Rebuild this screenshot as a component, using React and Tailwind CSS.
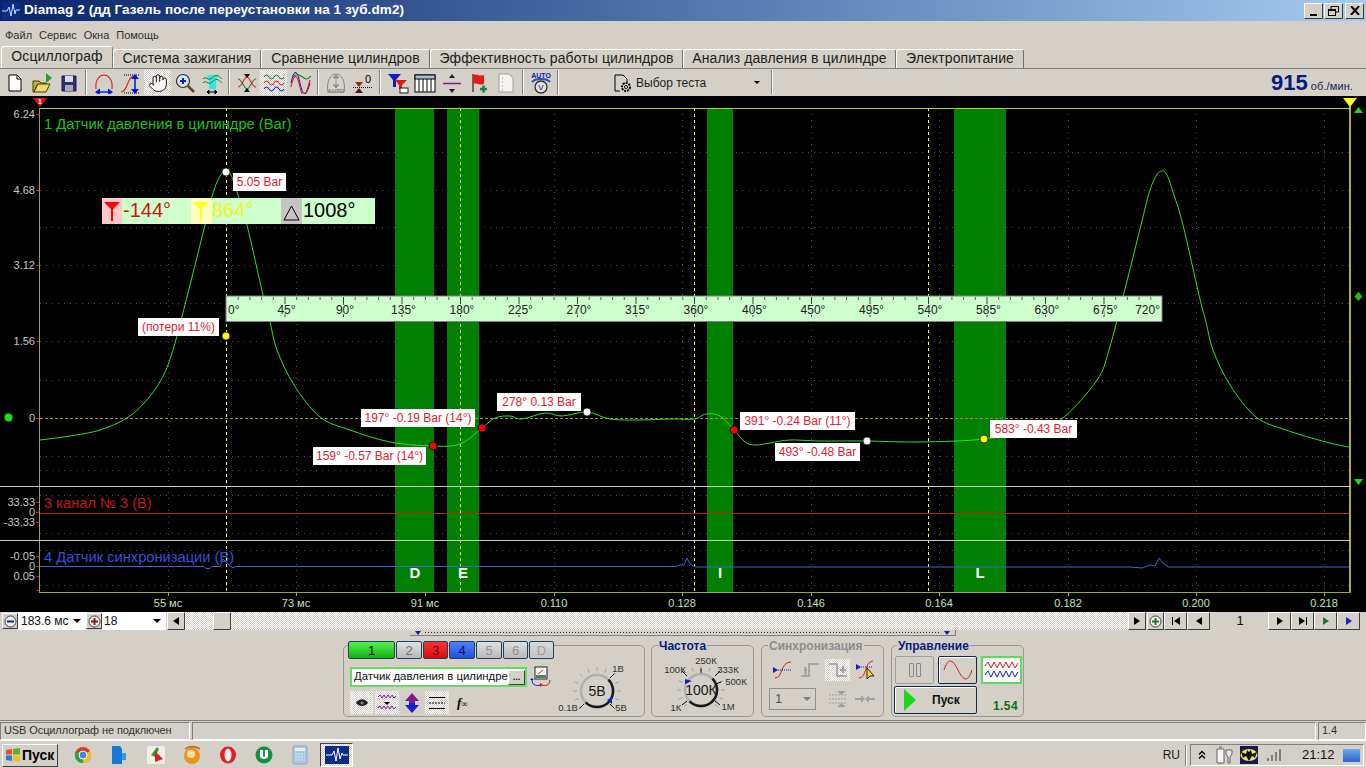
import React from 'react'
import { Hand } from 'lucide-react'

const raised = 'border border-t-white border-l-white border-r-[#404040] border-b-[#404040] bg-[#d4d0c8]'
const sunken = 'border border-t-[#808080] border-l-[#808080] border-r-white border-b-white'
const dither = 'bg-[repeating-conic-gradient(#ffffff_0_25%,#d4d0c8_0_50%)] bg-[length:2px_2px]'

// smooth line through the points (catmull-rom)
const smooth = (pts) => {
  let d = `M${pts[0][0]} ${pts[0][1]}`
  for (let i = 0; i < pts.length - 1; i++) {
    const p0 = pts[i - 1] || pts[i]
    const p1 = pts[i]
    const p2 = pts[i + 1]
    const p3 = pts[i + 2] || p2
    const c1 = [p1[0] + (p2[0] - p0[0]) / 6, p1[1] + (p2[1] - p0[1]) / 6]
    const c2 = [p2[0] - (p3[0] - p1[0]) / 6, p2[1] - (p3[1] - p1[1]) / 6]
    d += ` C${c1[0]} ${c1[1]} ${c2[0]} ${c2[1]} ${p2[0]} ${p2[1]}`
  }
  return d
}

const curve = [
  [40, 440], [70, 436], [100, 430], [127, 418], [145, 402], [161, 380], [173, 350], [190, 285], [205, 225], [213, 193], [220, 176], [226, 171],
  [231, 175], [238, 195], [247, 225], [263, 295], [270, 322], [277, 350], [294, 385], [320, 417], [350, 430], [390, 442], [432, 446], [460, 444], [482, 428],
  [495, 418], [510, 416], [522, 419], [545, 413], [562, 416], [587, 412], [610, 419], [640, 420], [670, 419], [694, 419], [706, 414], [720, 416], [734, 430],
  [745, 442], [755, 445], [770, 443], [790, 440], [820, 441], [866, 441], [920, 442], [984, 439], [1035, 429], [1063, 418], [1097, 380], [1109, 350], [1126, 285], [1141, 225], [1149, 193], [1156, 176], [1162, 171],
  [1167, 175], [1174, 195], [1183, 225], [1199, 295], [1206, 322], [1213, 350], [1230, 385], [1256, 417], [1286, 430], [1326, 442], [1349, 447],
]

const bands = [
  { x: 395, w: 39, l: 'D' },
  { x: 447, w: 32, l: 'E' },
  { x: 707, w: 26, l: 'I' },
  { x: 954, w: 52, l: 'L' },
]

const timeTicks = [
  [168, '55 мс'], [296, '73 мс'], [425, '91 мс'], [554, '0.110'], [682, '0.128'],
  [811, '0.146'], [939, '0.164'], [1068, '0.182'], [1196, '0.200'], [1324, '0.218'],
]

const yLabels = [
  [114, '6.24'], [190, '4.68'], [265, '3.12'], [341, '1.56'], [418, '0'],
  [502, '33.33'], [512, '0'], [522, '-33.33'], [556, '-0.05'], [566, '0'], [576, '0.05'],
]

const dots = [
  [226, 172, '#ffffff'], [226, 336, '#ffff00'], [433, 446, '#ff0000'], [482, 428, '#ff0000'],
  [587, 412, '#ffffff'], [734, 430, '#ff0000'], [867, 441, '#ffffff'], [984, 439, '#ffff00'],
]

const marks = [
  { t: '5.05 Bar', c: 'left-[233px] top-[77px] w-[53px]' },
  { t: '(потери 11%)', c: 'left-[138px] top-[222px] w-[81px]' },
  { t: '197° -0.19 Bar (14°)', c: 'left-[361px] top-[313px] w-[114px]' },
  { t: '159° -0.57 Bar (14°)', c: 'left-[313px] top-[351px] w-[113px]' },
  { t: '278° 0.13 Bar', c: 'left-[497px] top-[297px] w-[84px]' },
  { t: '391° -0.24 Bar (11°)', c: 'left-[740px] top-[316px] w-[115px]' },
  { t: '493° -0.48 Bar', c: 'left-[775px] top-[347px] w-[85px]' },
  { t: '583° -0.43 Bar', c: 'left-[990px] top-[324px] w-[87px]' },
]

const Funnel = ({ color }) => (
  <svg width="20" height="26" viewBox="0 0 20 26">
    <path d="M2 4H18L11 11V23H9V11Z" fill={color} />
  </svg>
)

const Chart = () => (
  <div className="relative h-[516px] bg-black overflow-hidden">
    <svg className="absolute inset-0 block" width="1366" height="516" viewBox="0 96 1366 516" fontFamily="Liberation Sans, sans-serif">
      {bands.map((b) => (
        <rect key={b.l} x={b.x} y="108" width={b.w} height="484" fill="#008000" />
      ))}
      {[152, 190, 227, 265, 303, 341, 380, 456, 470, 495, 533, 550, 585].map((y) => (
        <line key={y} x1="40" x2="1349" y1={y + 0.5} y2={y + 0.5} stroke="#505050" strokeDasharray="1 5" />
      ))}
      {timeTicks.map(([x]) => (
        <g key={x}>
          <line x1={x + 0.5} x2={x + 0.5} y1="108" y2="592" stroke="#505050" strokeDasharray="1 5" />
          <line x1={x + 0.5} x2={x + 0.5} y1="592" y2="596" stroke="#a0b060" />
        </g>
      ))}
      {[226, 460, 694, 928].map((x) => (
        <line key={x} x1={x + 0.5} x2={x + 0.5} y1="108" y2="592" stroke="#ffff66" strokeDasharray="3 3" />
      ))}
      <line x1="40" x2="1349" y1="418.5" y2="418.5" stroke="#a08850" strokeDasharray="3 2" />
      <line x1="40" x2="1349" y1="513.5" y2="513.5" stroke="#a83018" />
      <path d="M40 566.5H204L206 568.5H210L212 566.5H220L223 559L226 562L229 565L233 568L236 566.5H676L680 565H684L687 558L690 564L695 567H1130L1142 568L1150 565L1155 566L1159 558L1163 563L1168 567H1349" fill="none" stroke="#3868d8" />
      <path d={smooth(curve)} fill="none" stroke="#30e030" strokeWidth="1" />
      <line x1="39" x2="1351" y1="108.5" y2="108.5" stroke="#a8d040" />
      <line x1="39" x2="1351" y1="592.5" y2="592.5" stroke="#98a848" />
      <line x1="39.5" x2="39.5" y1="108" y2="592" stroke="#a0a040" />
      {[114, 190, 265, 341, 418, 502, 512, 522, 556, 566, 576, 590].map((y) => (
        <line key={y} x1="36" x2="39" y1={y + 0.5} y2={y + 0.5} stroke="#b03010" />
      ))}
      <line x1="0" x2="1350" y1="486.5" y2="486.5" stroke="#c8c8c8" />
      <line x1="0" x2="1350" y1="540.5" y2="540.5" stroke="#c8c8c8" />
      <line x1="1350" x2="1350" y1="100" y2="592" stroke="#e8e850" strokeWidth="1.5" />
      {yLabels.map(([y, t]) => (
        <text key={`${y}${t}`} x="35" y={y + 4} textAnchor="end" fontSize="11" fill="#c8c8c8">{t}</text>
      ))}
      {timeTicks.map(([x, t]) => (
        <text key={t} x={x} y="607" textAnchor="middle" fontSize="11" fill="#c4e0c0">{t}</text>
      ))}
      <text x="44" y="129" fontSize="14.7" fill="#20c020">1 Датчик давления в цилиндре (Bar)</text>
      <text x="44" y="508" fontSize="14.7" fill="#c01818">3 канал № 3 (В)</text>
      <text x="44" y="562" fontSize="14.7" fill="#3850d8">4 Датчик синхронизации (В)</text>
      {bands.map((b) => (
        <text key={b.l} x={b.x + (b.l === 'L' ? 26 : b.l === 'I' ? 13 : b.l === 'D' ? 20 : 16)} y="578" textAnchor="middle" fontSize="15" fontWeight="700" fill="#ffffff">{b.l}</text>
      ))}
      {/* angle ruler */}
      <rect x="226" y="296" width="936" height="25.5" fill="#ccffcc" stroke="#808080" />
      {Array.from({ length: 81 }, (_, i) => (
        <line key={i} x1={226.5 + i * 11.7} x2={226.5 + i * 11.7} y1="297" y2={i % 5 === 0 ? (i === 0 ? 297 : 317) : 300} stroke="#404040" strokeWidth={i % 5 === 0 ? 1 : 0.8} />
      ))}
      {Array.from({ length: 17 }, (_, i) => (
        <text key={i} x={i === 0 ? 228 : i === 16 ? 1160 : 228 + i * 58.5} y="314" textAnchor={i === 0 ? 'start' : i === 16 ? 'end' : 'middle'} fontSize="12" fill="#202020" stroke="#ccffcc" strokeWidth="2" paintOrder="stroke">{`${i * 45}°`}</text>
      ))}
      {dots.map(([x, y, c]) => (
        <circle key={`${x}${y}`} cx={x} cy={y} r="4" fill={c} stroke="#000" strokeWidth="0.7" />
      ))}
      {/* markers on the edges */}
      <path d="M33 98H47L40 107Z" fill="#e81010" />
      <text x="40" y="104" textAnchor="middle" fontSize="7" fontWeight="700" fill="#fff">1</text>
      <path d="M1343 98H1357L1350 107Z" fill="#ffff20" />
      <path d="M1354 113L1358.5 107L1363 113Z" fill="#18e018" />
      <path d="M1358.5 292L1362.5 296.5L1358.5 301L1354.5 296.5Z" fill="#18c018" />
      <path d="M1354 479H1363L1358.5 485Z" fill="#18e018" />
      <circle cx="8.5" cy="417.5" r="4" fill="#18e018" />
    </svg>

    <div className="absolute left-[102px] top-[102px] flex h-[26px] w-[273px] items-start bg-[#ccffcc] text-[20px] leading-[24px]">
      <div className="h-[26px] w-[20px] bg-[#ffc8c8]"><Funnel color="#ff0000" /></div>
      <div className="w-[69px] pl-[1px] text-[#d81010]">-144°</div>
      <div className="h-[26px] w-[21px] bg-[#ffffc0]"><Funnel color="#ffff20" /></div>
      <div className="w-[69px] text-[#f4f428]">864°</div>
      <div className="h-[26px] w-[21px] bg-[#c4c4c4]">
        <svg width="21" height="26" viewBox="0 0 21 26"><path d="M10.5 8L18 22H3Z" fill="none" stroke="#000" /></svg>
      </div>
      <div className="pl-[1px] text-black">1008°</div>
    </div>

    {marks.map((m) => (
      <div key={m.t} className={`absolute ${m.c} bg-white text-center text-[12px] leading-[18px] whitespace-nowrap text-[#e0202c]`}>{m.t}</div>
    ))}
  </div>
)

const Ic = ({ w = 22, h = 22, children }) => (
  <svg width={w} height={h} viewBox={`0 0 ${w} ${h}`} fill="none">{children}</svg>
)

const toolIcons = {
  fresh: (
    <Ic><path d="M5 3H13L17 7V19H5Z" fill="#fff" stroke="#000" /><path d="M13 3V7H17" stroke="#000" /></Ic>
  ),
  open: (
    <Ic><path d="M15 1L21 6L15 11Z" fill="#28a028" /><path d="M2 9H8L10 11H15V13H6L3 20H2Z" fill="#c8a838" stroke="#404000" /><path d="M3 20L7 12H19L15 20Z" fill="#f0d870" stroke="#404000" /></Ic>
  ),
  save: (
    <Ic><path d="M4 4H18V19H4Z" fill="#303070" stroke="#202040" /><rect x="7" y="4" width="8" height="6" fill="#d8d8e8" /><rect x="7" y="13" width="8" height="6" fill="#a8a8c0" /></Ic>
  ),
  arch: (
    <Ic><path d="M3 17C2 7 7 3 11 3S20 7 19 17" stroke="#e01818" strokeWidth="1.1" /><path d="M4 20H18" stroke="#0018d0" strokeWidth="1.4" /><path d="M2 20L7 16.500V23.500ZM20 20L15 16.500V23.500Z" fill="#0018d0" /></Ic>
  ),
  scurve: (
    <Ic><path d="M1 20C8 20 7 4 14 4" stroke="#e01818" strokeWidth="1.1" /><path d="M4 3H20M4 21H20" stroke="#000" strokeDasharray="1 1" /><path d="M15 5V19" stroke="#0018d0" strokeWidth="1.5" /><path d="M15 2L19 7H11ZM15 22L19 17H11Z" fill="#0018d0" /></Ic>
  ),
  zoom: (
    <Ic><circle cx="9" cy="9" r="6.5" fill="#d8e4f4" stroke="#303030" strokeWidth="1.2" /><path d="M6 9H12M9 6V12" stroke="#1020c0" strokeWidth="2" /><path d="M14 14L20 20" stroke="#604818" strokeWidth="2.5" /></Ic>
  ),
  fit: (
    <Ic><path d="M6 3H17L15 10V17H8V10Z" fill="#30e8e0" /><path d="M2 7C5 3 7 10 11 6S17 3 21 7M2 11C5 7 7 14 11 10S17 7 21 11" stroke="#108830" /><path d="M6 20H16M6 20L8 18V22ZM16 20L14 18V22Z" stroke="#000" fill="#000" /></Ic>
  ),
  cross: (
    <Ic><path d="M2 7C6 7 8 17 11 17S16 7 20 7" stroke="#108830" strokeWidth="1.1" /><path d="M2 15C6 15 8 5 11 5S16 15 20 15" stroke="#e01818" strokeWidth="1.1" /><path d="M8 2H14L11 6ZM8 20H14L11 16Z" fill="#000" /></Ic>
  ),
  rows: (
    <Ic><path d="M1 5Q3.5 1 6 5T11 5T16 5T21 5" stroke="#108830" strokeWidth="1.1" /><path d="M1 11Q3.5 7 6 11T11 11T16 11T21 11" stroke="#e01818" strokeWidth="1.1" /><path d="M1 17Q3.5 13 6 17T11 17T16 17T21 17" stroke="#1020c0" strokeWidth="1.1" /></Ic>
  ),
  mixed: (
    <Ic><path d="M1 11C4 -3 7 -3 10 11S16 25 20 11" stroke="#1020c0" strokeWidth="1.1" /><path d="M1 15C4 1 7 1 10 15S16 24 20 8" stroke="#e01818" strokeWidth="1.1" /><path d="M3 5C7 1 10 3 14 6S19 5 21 4" stroke="#108830" strokeWidth="1.1" /></Ic>
  ),
  auto: (
    <Ic><path d="M3 20C1 9 6 2 11 2S21 9 19 20Z" stroke="#808080" fill="#d8d4cc" /><path d="M11 5V14M8 6H14L11 3ZM8 13H14L11 16Z" stroke="#909090" fill="#909090" /><text x="11" y="21" textAnchor="middle" fontSize="6" fontWeight="700" fill="#808080">AUTO</text></Ic>
  ),
  zero: (
    <Ic><path d="M3 10H11L7 15Z" fill="#a02020" /><path d="M3 21H11L7 16Z" fill="#402020" /><path d="M1 15.5H21" stroke="#000" strokeDasharray="1 1" /><text x="16" y="11" textAnchor="middle" fontSize="11" fill="#000">0</text></Ic>
  ),
  filter: (
    <Ic><path d="M1 2H14L9 8V15H6V8Z" fill="#1020c0" /><path d="M8 8H20L15 13V17H12V13Z" fill="#e01818" /><rect x="13" y="16" width="8" height="5" fill="#fff" stroke="#202020" /></Ic>
  ),
  table: (
    <Ic w={24}><rect x="2" y="3" width="20" height="17" fill="#fff" stroke="#000" /><rect x="2" y="3" width="20" height="4" fill="#a8c0e8" stroke="#000" /><path d="M6 7V20M10 7V20M14 7V20M18 7V20" stroke="#000" /></Ic>
  ),
  split: (
    <Ic><path d="M2 11.5H20" stroke="#801890" strokeWidth="1.5" /><path d="M8 6H14L11 2ZM8 17H14L11 21Z" fill="#202020" /></Ic>
  ),
  flag: (
    <Ic><path d="M5 2V20" stroke="#000" /><path d="M5 3C9 1 11 5 16 3V12C11 14 9 10 5 12Z" fill="#e81818" /><path d="M12 17H19M15.5 13.5V20.5" stroke="#108830" strokeWidth="2.5" /></Ic>
  ),
  notes: (
    <Ic><path d="M4 2H14L18 6V20H4Z" fill="#f4f4f0" stroke="#a0a0a0" /><path d="M7 6H9M7 10H9M7 14H9M7 18H9" stroke="#808080" strokeDasharray="1 1" /></Ic>
  ),
  clock: (
    <Ic><text x="11" y="6" textAnchor="middle" fontSize="7" fontWeight="700" fill="#1020a0">AUTO</text><path d="M2 10C5 6 17 6 20 10" stroke="#2050d0" strokeWidth="2" /><circle cx="11" cy="15" r="6" fill="#e0e0e0" stroke="#303030" strokeWidth="1.3" /><text x="11" y="18" textAnchor="middle" fontSize="8" fill="#202080">V</text></Ic>
  ),
}

const Tool = ({ name, on }) => (
  <div className={`flex h-[25px] w-[27px] items-center justify-center ${on ? dither : ''}`}>{toolIcons[name]}</div>
)

const Sep = () => <div className="mx-[3px] h-[25px] w-[2px] border-l border-l-[#808080] border-r border-r-white" />

const TabBar = () => {
  const tabs = [
    ['Система зажигания', 'w-[148px]'],
    ['Сравнение цилиндров', 'w-[169px]'],
    ['Эффективность работы цилиндров', 'w-[253px]'],
    ['Анализ давления в цилиндре', 'w-[213px]'],
    ['Электропитание', 'w-[128px]'],
  ]
  return (
    <div className="flex h-[22px] items-end pl-[1px] text-[14px] tracking-[0.1px] text-[#202020]">
      <div className="flex h-[22px] w-[112px] items-center justify-center rounded-t-[3px] border border-b-0 border-t-white border-l-white border-r-[#808080] pb-[2px]">Осциллограф</div>
      {tabs.map(([t, w]) => (
        <div key={t} className={`flex h-[19px] ${w} items-center justify-center rounded-t-[3px] border border-b-0 border-t-white border-l-white border-r-[#707070] pb-[1px]`}>{t}</div>
      ))}
    </div>
  )
}

const Toolbar = () => (
  <div className="flex h-[28px] items-center border-t border-t-[#808080] pl-[1px]">
    <Tool name="fresh" /><Tool name="open" /><Tool name="save" /><Sep />
    <Tool name="arch" /><Tool name="scurve" />
    <div className={`flex h-[25px] w-[27px] items-center justify-center ${dither}`}><Hand size={20} strokeWidth={1.1} color="#000" fill="#fff" /></div>
    <Tool name="zoom" /><Tool name="fit" /><Sep />
    <Tool name="cross" /><Tool name="rows" on /><Tool name="mixed" /><Sep />
    <Tool name="auto" /><Tool name="zero" /><Sep />
    <Tool name="filter" /><Tool name="table" /><Tool name="split" /><Tool name="flag" /><Tool name="notes" /><Sep />
    <Tool name="clock" /><Sep />
    <div className="ml-[50px] flex h-[25px] w-[156px] items-center text-[12px] text-[#202020]">
      <svg width="22" height="22" viewBox="0 0 22 22" fill="none">
        <path d="M3 3H11L15 7V10M3 3V19H8" stroke="#000" />
        <circle cx="14" cy="15" r="4" stroke="#000" strokeWidth="2" strokeDasharray="2 1" />
        <circle cx="14" cy="15" r="1.5" fill="#fff" stroke="#000" />
      </svg>
      <span className="ml-[2px]">Выбор теста</span>
      <span className="ml-auto mr-[8px] h-0 w-0 border-x-[3px] border-t-[3px] border-x-transparent border-t-black" />
    </div>
    <Sep />
    <div className="ml-auto flex items-baseline pr-[13px] text-[#0a1a80]">
      <span className="text-[22px] leading-[26px] font-bold">915</span>
      <span className="ml-[3px] text-[11px] tracking-[0.1px] text-[#202050]">об./мин.</span>
    </div>
  </div>
)

const Tri = ({ dir, color = '#000' }) => (
  <span className={`inline-block h-0 w-0 border-y-[4px] border-y-transparent ${dir === 'l' ? 'border-r-[6px]' : 'border-l-[6px]'}`} style={dir === 'l' ? { borderRightColor: color } : { borderLeftColor: color }} />
)

const RoundBtn = ({ sign, color }) => (
  <div className={`flex h-[16px] w-[16px] items-center justify-center ${raised}`}>
    <svg width="13" height="13" viewBox="0 0 13 13"><circle cx="6.5" cy="6.5" r="5.5" fill="#f0f0f0" stroke="#404040" />{sign === '-' ? <path d="M3 6.5H10" stroke={color} strokeWidth="2" /> : <path d="M3 6.5H10M6.5 3V10" stroke={color} strokeWidth="2" />}</svg>
  </div>
)

const NavBtn = ({ children, w = 'w-[23px]' }) => (
  <div className={`flex h-[18px] ${w} items-center justify-center ${raised}`}>{children}</div>
)

const ScrollRow = () => (
  <div className="flex h-[18px] items-center text-[12px] text-[#101010]">
    <div className="ml-[2px]"><RoundBtn sign="-" color="#1020a0" /></div>
    <div className="flex h-[18px] w-[68px] items-center bg-white pl-[3px] pr-[5px]">
      183.6 мс<span className="ml-auto h-0 w-0 border-x-[4px] border-t-[4px] border-x-transparent border-t-black" />
    </div>
    <RoundBtn sign="+" color="#a01020" />
    <div className="flex h-[18px] w-[64px] items-center bg-white pl-[2px] pr-[5px]">
      18<span className="ml-auto h-0 w-0 border-x-[4px] border-t-[4px] border-x-transparent border-t-black" />
    </div>
    <div className="ml-[1px]"><NavBtn w="w-[18px]"><Tri dir="l" /></NavBtn></div>
    <div className={`h-[18px] w-[943px] ${dither} pl-[28px]`}>
      <div className={`h-[18px] w-[18px] ${raised}`} />
    </div>
    <NavBtn w="w-[18px]"><Tri dir="r" /></NavBtn>
    <div className="ml-[1px]"><NavBtn w="w-[17px]">
      <svg width="13" height="13" viewBox="0 0 13 13"><circle cx="6.5" cy="6.5" r="5.5" fill="#f0f0f0" stroke="#404040" /><path d="M3 6.5H10M6.5 3V10" stroke="#108020" strokeWidth="2" /></svg>
    </NavBtn></div>
    <NavBtn><span className="mr-[1px] h-[8px] w-[1px] bg-black" /><Tri dir="l" /></NavBtn>
    <NavBtn><Tri dir="l" /></NavBtn>
    <div className="w-[58px] pl-[2px] text-center text-[13px]">1</div>
    <NavBtn><Tri dir="r" /></NavBtn>
    <NavBtn><Tri dir="r" /><span className="ml-[1px] h-[8px] w-[1px] bg-black" /></NavBtn>
    <NavBtn><Tri dir="r" color="#108020" /></NavBtn>
    <NavBtn><Tri dir="r" color="#1020e0" /></NavBtn>
  </div>
)

const channels = [
  ['1', 'w-[47px] bg-gradient-to-b from-[#50f050] to-[#10b010] text-black'],
  ['2', 'w-[26px] bg-gradient-to-b from-[#e0e0e0] to-[#b8b8b8] text-[#707070]'],
  ['3', 'w-[25px] bg-gradient-to-b from-[#ff3030] to-[#d80808] text-[#601010]'],
  ['4', 'w-[26px] bg-gradient-to-b from-[#5080f8] to-[#2050e0] text-[#101050]'],
  ['5', 'w-[26px] bg-gradient-to-b from-[#e0e0e0] to-[#b8b8b8] text-[#909090]'],
  ['6', 'w-[25px] bg-gradient-to-b from-[#e0e0e0] to-[#b8b8b8] text-[#909090]'],
  ['D', 'w-[25px] bg-gradient-to-b from-[#d8d8d8] to-[#c4c4c4] text-[#a0a0a0]'],
]

const Knob = ({ w, h, cx, cy, r, label, labels, mark, fs = 13 }) => {
  const ticks = Array.from({ length: 13 }, (_, i) => {
    const a = ((-225 + i * 22.5) * Math.PI) / 180
    return (
      <line key={i} x1={cx + Math.cos(a) * (r + 4)} y1={cy + Math.sin(a) * (r + 4)} x2={cx + Math.cos(a) * (r + 8)} y2={cy + Math.sin(a) * (r + 8)} stroke="#a0a0a0" />
    )
  })
  return (
    <svg width={w} height={h} viewBox={`0 0 ${w} ${h}`} fontFamily="Liberation Sans, sans-serif">
      {ticks}
      {labels.map(([t, x, y, lx, ly]) => (
        <g key={t}>
          {lx !== undefined && <line x1={cx + lx} y1={cy + ly} x2={cx + lx * 1.35} y2={cy + ly * 1.35} stroke="#000" />}
          <text x={x} y={y} textAnchor="middle" fontSize="9.5" fill="#303030">{t}</text>
        </g>
      ))}
      <circle cx={cx} cy={cy} r={r} fill="none" stroke="#b0b0b0" strokeWidth="2.5" />
      <path d={`M${cx + r * 0.71} ${cy - r * 0.71}A${r} ${r} 0 1 1 ${cx - r * 0.71} ${cy + r * 0.71}`} fill="none" stroke="#181818" strokeWidth="2.5" />
      <text x={cx} y={cy + fs * 0.36} textAnchor="middle" fontSize={fs} fill="#181818">{label}</text>
      {mark}
    </svg>
  )
}

const ChannelPanel = () => (
  <div className="relative flex h-[72px] w-[302px] rounded-[5px] border border-[#9c988f]">
    <div className="absolute -top-[5px] left-[4px] flex gap-[1px]">
      {channels.map(([t, c]) => (
        <div key={t} className={`flex h-[18px] items-center justify-center rounded-[2px] border border-[#204060] text-[13px] leading-none ${c}`}>{t}</div>
      ))}
    </div>
    <div className="flex flex-col pl-[6px] pt-[20px]">
      <div className="flex items-center">
        <div className="flex h-[20px] w-[177px] items-center border-2 border-[#60e060] bg-white pl-[2px] text-[11.4px] whitespace-nowrap text-[#101010]">
          <span>Датчик давления в цилиндре</span>
          <div className={`ml-auto mr-[1px] flex h-[15px] w-[17px] shrink-0 items-center justify-center text-[9px] leading-none font-bold ${raised}`}>...</div>
        </div>
        <svg className="ml-[3px]" width="22" height="22" viewBox="0 0 22 22" fill="none">
          <rect x="5" y="1" width="12" height="12" fill="#fff" stroke="#202020" /><rect x="6" y="9" width="10" height="3" fill="#508060" /><path d="M8 8L13 4" stroke="#e01818" />
          <path d="M2 14C2 20 8 20 10 19" stroke="#1020c0" /><path d="M20 14C20 20 14 20 12 19" stroke="#d01818" /><path d="M0 14H4L2 12Z" fill="#1020c0" /><path d="M10 17V21L13 19Z" fill="#d01818" />
        </svg>
      </div>
      <div className="mt-[3px] flex h-[23px] items-center">
        <div className={`flex h-[23px] w-[23px] items-center justify-center ${dither}`}>
          <svg width="14" height="10" viewBox="0 0 14 10"><path d="M1 5C4 0 10 0 13 5C10 9 4 9 1 5Z" fill="#202020" /><circle cx="7" cy="5" r="1.5" fill="#808080" /></svg>
        </div>
        <div className={`ml-[2px] flex h-[23px] w-[24px] items-center justify-center ${dither}`}>
          <svg width="20" height="20" viewBox="0 0 20 20" fill="none"><path d="M1 4L3 2L5 5L7 2L9 5L11 2L13 5L15 2L17 5L19 3" stroke="#801890" /><path d="M7 9H13L10 12Z" fill="#000" /><path d="M1 15L3 13L5 16L7 13L9 16L11 13L13 16L15 13L17 16L19 14" stroke="#801890" /></svg>
        </div>
        <div className="flex h-[23px] w-[26px] items-center justify-center">
          <svg width="16" height="20" viewBox="0 0 16 20"><path d="M8 0L15 8H11V10H5V8H1Z" fill="#801890" /><path d="M8 20L15 12H11V10H5V12H1Z" fill="#1020d0" /></svg>
        </div>
        <div className={`flex h-[23px] w-[24px] items-center justify-center ${dither}`}>
          <svg width="18" height="14" viewBox="0 0 18 14"><path d="M1 1.5H17M1 12.5H17" stroke="#000" /><path d="M1 7H17" stroke="#000" strokeDasharray="2 1" /></svg>
        </div>
        <div className="ml-[8px] [font-family:'Liberation_Serif',serif] text-[13px] leading-none font-bold italic">f<span className="text-[9px]">∞</span></div>
      </div>
    </div>
    <div className="absolute left-[205px] top-0">
      <Knob
        w={92} h={70} cx={48} cy={45} r={16} label="5В" fs={14}
        labels={[['1В', 69, 26, 13, -13], ['0.1В', 19, 65, -13, 13], ['5В', 72, 65, 13, 13]]}
        mark={<path d="M58 54L63 51L63 58Z" fill="#1020d0" />}
      />
    </div>
  </div>
)

const Legend = ({ className, children }) => (
  <div className={`absolute -top-[7px] bg-[#d4d0c8] px-[1px] text-[12px] leading-[14px] font-bold ${className}`}>{children}</div>
)

const FreqPanel = () => (
  <div className="relative h-[72px] w-[103px] rounded-[5px] border border-[#9c988f]">
    <Legend className="left-[6px] text-[#0a1a80]">Частота</Legend>
    <Knob
      w={101} h={70} cx={49} cy={44} r={16} label="100К" fs={14}
      labels={[['250К', 54, 18, 0, -16], ['100К', 23, 27, -14, -14], ['333К', 76, 27, 14, -14], ['500К', 84, 39, 15, -6], ['1К', 24, 65, -14, 11], ['1М', 76, 64, 14, 11]]}
      mark={<path d="M33 33L40 35L33 38Z" fill="#1020d0" />}
    />
  </div>
)

const SyncPanel = () => (
  <div className="relative h-[72px] w-[123px] rounded-[5px] border border-[#9c988f]">
    <Legend className="left-[6px] text-[#8c8c8c]">Синхронизация</Legend>
    <div className="flex items-center pl-[7px] pt-[13px]">
      <div className="flex h-[22px] w-[28px] items-center justify-center">
        <svg width="20" height="20" viewBox="0 0 20 20" fill="none"><path d="M2 18C10 18 7 2 18 2" stroke="#e01818" /><path d="M0 7L5 10L0 13Z" fill="#1020c0" /><path d="M5 10H18" stroke="#1020c0" strokeDasharray="1 1" /></svg>
      </div>
      <div className="flex h-[22px] w-[28px] items-center justify-center">
        <svg width="20" height="18" viewBox="0 0 20 18" fill="none"><path d="M0 15H8V3H18" stroke="#989898" strokeWidth="1.5" /><path d="M3 9H6M4.500 6V14" stroke="#a0a0a0" strokeWidth="2" /></svg>
      </div>
      <div className={`flex h-[22px] w-[25px] items-center justify-center ${dither}`}>
        <svg width="20" height="18" viewBox="0 0 20 18" fill="none"><path d="M1 3H9V15H19" stroke="#989898" strokeWidth="1.5" /><path d="M12 9H18M15 5V12" stroke="#a0a0a0" strokeWidth="2" /></svg>
      </div>
      <div className="ml-[2px] flex h-[22px] w-[28px] items-center justify-center">
        <svg width="22" height="22" viewBox="0 0 22 22" fill="none"><path d="M4 19C12 19 9 3 18 2" stroke="#e01818" /><path d="M1 5L6 8L1 11Z" fill="#1020c0" /><path d="M6 8H18" stroke="#1020c0" strokeDasharray="1 1" /><path d="M12 9L12 20L15 17L19 17Z" fill="#ffd820" stroke="#202020" /></svg>
      </div>
    </div>
    <div className="flex items-center pl-[7px] pt-[7px]">
      <div className="flex h-[22px] w-[47px] items-center border border-[#909090] pl-[5px] text-[13px] text-[#505050]">
        1<span className="ml-auto mr-[4px] h-0 w-0 border-x-[4px] border-t-[4px] border-x-transparent border-t-[#808080]" />
      </div>
      <div className="ml-[7px] flex w-[30px] justify-center">
        <svg width="18" height="18" viewBox="0 0 18 18" fill="none"><path d="M0 5H18M0 9H18M0 13H18" stroke="#a0a0a0" strokeDasharray="2 1" /><path d="M8 1H17L12 5ZM8 17H17L12 13Z" fill="#a0a0a0" /></svg>
      </div>
      <div className="flex w-[24px] justify-center">
        <svg width="20" height="10" viewBox="0 0 20 10"><path d="M0 4H6V1L10 5L6 9V6H0ZM20 4H14V1L10 5L14 9V6H20Z" fill="#a0a0a0" /></svg>
      </div>
    </div>
  </div>
)

const ControlPanel = () => (
  <div className="relative h-[72px] w-[133px] rounded-[5px] border border-[#9c988f]">
    <Legend className="left-[5px] text-[#0a1a80]">Управление</Legend>
    <div className="flex gap-[4px] pl-[3px] pt-[10px]">
      <div className="flex h-[28px] w-[39px] items-center justify-center gap-[2px] rounded-[2px] border border-[#a0a0a0]">
        <span className="h-[14px] w-[5px] rounded-[1px] border border-[#888888]" />
        <span className="h-[14px] w-[5px] rounded-[1px] border border-[#888888]" />
      </div>
      <div className="flex h-[28px] w-[39px] items-center justify-center rounded-[2px] border border-[#102850] shadow-[inset_1px_1px_0_#ffffff]">
        <svg width="30" height="20" viewBox="0 0 30 20" fill="none"><path d="M1 10C5 -2 9 -2 15 10S25 22 29 10" stroke="#d81818" /></svg>
      </div>
      <div className="flex h-[28px] w-[41px] items-center justify-center border-2 border-[#60d860] bg-white">
        <svg width="36" height="20" viewBox="0 0 36 20" fill="none"><path d="M1 6L4 2L7 8L10 2L13 8L16 2L19 8L22 2L25 8L28 2L31 8L34 3" stroke="#d81818" /><path d="M1 15L4 11L7 17L10 11L13 17L16 11L19 17L22 11L25 17L28 11L31 17L34 12" stroke="#1020c0" /></svg>
      </div>
    </div>
    <div className="flex items-end pl-[2px] pt-[2px]">
      <div className="flex h-[28px] w-[83px] items-center rounded-[2px] border border-[#102850] pl-[9px] shadow-[inset_1px_1px_0_#ffffff]">
        <svg width="12" height="22" viewBox="0 0 12 22"><path d="M0 0L12 11L0 22Z" fill="#18d818" /></svg>
        <span className="ml-[16px] text-[12px] font-bold text-[#101010]">Пуск</span>
      </div>
      <span className="ml-[16px] text-[12px] leading-[16px] font-bold tracking-[0.4px] text-[#107010]">1.54</span>
    </div>
  </div>
)

const Controls = () => (
  <div className="h-[90px]">
    <div className="ml-[410px] flex h-[6px] w-[546px] items-center justify-between border-r border-b border-[#808080] px-[5px]">
      <span className="h-0 w-0 border-x-[3px] border-t-[4px] border-x-transparent border-t-[#1020a0]" />
      <span className="mx-[4px] h-[1px] flex-1 bg-[repeating-linear-gradient(90deg,#303030_0_1px,transparent_1px_3px)]" />
      <span className="h-0 w-0 border-x-[3px] border-t-[4px] border-x-transparent border-t-[#1020a0]" />
    </div>
    <div className="mt-[9px] flex pl-[343px]">
      <ChannelPanel />
      <div className="ml-[6px]"><FreqPanel /></div>
      <div className="ml-[7px]"><SyncPanel /></div>
      <div className="ml-[7px]"><ControlPanel /></div>
    </div>
  </div>
)

const Status = () => (
  <div className="flex h-[21px] items-center border-t border-t-[#808080] border-b border-b-white text-[11px] tracking-[-0.1px] text-[#303030]">
    <div className={`flex h-[18px] w-[190px] items-center pl-[3px] ${sunken}`}>USB Осциллограф не подключен</div>
    <div className={`ml-[2px] h-[18px] w-[1124px] ${sunken}`} />
    <div className={`ml-[2px] flex h-[18px] flex-1 items-center pl-[3px] ${sunken}`}>1.4</div>
  </div>
)

const Taskbar = () => (
  <div className="flex h-[28px] items-center bg-[#d4d0c8] pl-[2px]">
    <div className={`flex h-[23px] w-[56px] items-center pl-[2px] text-[14px] font-bold text-black ${raised}`}>
      <svg width="16" height="16" viewBox="0 0 16 16"><path d="M1 3L7 2V7.500H1Z" fill="#e85020" /><path d="M8 2L15 1V7.500H8Z" fill="#60b030" /><path d="M1 8.500H7V14L1 13Z" fill="#2080e0" /><path d="M8 8.500H15V15L8 14Z" fill="#f0c020" /></svg>
      <span className="ml-[1px]">Пуск</span>
    </div>
    <div className="ml-[7px] flex items-center">
      <div className="flex w-[36px] justify-center">
        <svg width="18" height="18" viewBox="0 0 18 18"><circle cx="9" cy="9" r="8" fill="#e03828" /><path d="M9 9L16 5A8 8 0 0 1 9 17Z" fill="#f0c020" /><path d="M9 9L9 17A8 8 0 0 1 2 5Z" fill="#30a040" /><circle cx="9" cy="9" r="4" fill="#4088e8" stroke="#fff" /></svg>
      </div>
      <div className="flex w-[36px] justify-center">
        <svg width="16" height="20" viewBox="0 0 16 20"><path d="M1 1H9L11 4V19H1Z" fill="#1878d8" /><path d="M11 8H15V15H11Z" fill="#3898e8" /></svg>
      </div>
      <div className="flex w-[37px] justify-center">
        <svg width="20" height="20" viewBox="0 0 20 20"><rect x="1" y="1" width="18" height="18" rx="2" fill="#f4f0e8" /><path d="M5 10L11 2L13 4L9 12Z" fill="#30a030" /><path d="M9 6L17 14L9 17Z" fill="#d82020" /></svg>
      </div>
      <div className="flex w-[36px] justify-center">
        <svg width="20" height="20" viewBox="0 0 20 20"><circle cx="10" cy="11" r="8" fill="#f09018" /><circle cx="9" cy="9" r="4" fill="#f8e0a0" /><path d="M3 4C8 1 13 1 18 4" stroke="#d07010" fill="none" strokeWidth="2" /></svg>
      </div>
      <div className="flex w-[36px] justify-center">
        <svg width="18" height="18" viewBox="0 0 18 18"><ellipse cx="9" cy="9" rx="8" ry="8.500" fill="#e02020" /><ellipse cx="9" cy="9" rx="3.500" ry="6.500" fill="#f8e8e8" /></svg>
      </div>
      <div className="flex w-[36px] justify-center">
        <svg width="18" height="18" viewBox="0 0 18 18"><circle cx="9" cy="9" r="8.500" fill="#109040" /><path d="M5 4V10C5 14 13 14 13 10V4H10V10C10 11 8 11 8 10V4Z" fill="#fff" /></svg>
      </div>
      <div className="flex w-[36px] justify-center">
        <svg width="16" height="20" viewBox="0 0 16 20"><rect x="1" y="1" width="14" height="18" rx="1" fill="#a8c8e8" stroke="#90a8c0" /><rect x="3" y="3" width="10" height="3" fill="#e0f0f8" /><path d="M3 9H13M3 12H13M3 15H13" stroke="#e8e8e8" strokeDasharray="2 1" /></svg>
      </div>
    </div>
    <div className={`ml-[2px] flex h-[24px] w-[33px] items-center justify-center border border-t-[#404040] border-l-[#404040] border-r-white border-b-white ${dither}`}>
      <svg width="24" height="18" viewBox="0 0 24 18"><rect width="24" height="18" fill="#0c2c88" /><path d="M1 9H7L9 5L11 15L13 2L15 13L17 7L18 9H23" stroke="#fff" fill="none" /></svg>
    </div>
    <div className="ml-auto flex items-center">
      <span className="mr-[5px] text-[12px] text-[#202020]">RU</span>
      <span className="h-[21px] w-[2px] border-l border-l-[#808080] border-r border-r-white" />
      <div className={`ml-[3px] mr-[2px] flex h-[22px] w-[174px] items-center pl-[7px] ${sunken}`}>
        <svg width="8" height="10" viewBox="0 0 8 10" fill="none"><path d="M1 4.500L4 1.500L7 4.500M1 8.500L4 5.500L7 8.500" stroke="#000" strokeWidth="1.3" /></svg>
        <svg className="ml-[9px]" width="18" height="18" viewBox="0 0 18 18" fill="none"><path d="M2 3H9V17H2Z" stroke="#606060" fill="#f4f4f4" /><path d="M4 1H7" stroke="#606060" /><path d="M11 4H17V8L15 11V17H13V11L11 8Z" fill="#e8e8e8" stroke="#606060" /></svg>
        <svg className="ml-[7px]" width="18" height="18" viewBox="0 0 18 18"><rect width="18" height="18" fill="#181850" /><ellipse cx="9" cy="9" rx="8.500" ry="6" fill="#f0e860" /><path d="M1 6L6 8L7 4L9 6L11 4L12 8L17 6L15 12L12 10L9 15L6 10L3 12Z" fill="#101010" /></svg>
        <svg className="ml-[9px]" width="15" height="12" viewBox="0 0 15 12" fill="none" stroke="#808080"><path d="M1 9V12M5 6V12M9 3V12M13 0V12" strokeWidth="2" /></svg>
        <span className="ml-[20px] text-[13px] text-[#101010]">21:12</span>
        <div className="ml-[8px] h-[13px] w-[17px] bg-gradient-to-b from-[#70a8e8] to-[#2868c8]" />
      </div>
    </div>
  </div>
)

const App = () => (
  <div className="h-[768px] w-[1366px] overflow-hidden bg-[#d4d0c8] [font-family:'Liberation_Sans',sans-serif]">
    <div className="flex h-[21px] items-center bg-gradient-to-r from-[#0a246a] to-[#a6caf0] pl-[2px] pr-[2px] text-[13.5px] font-bold tracking-[0.1px] text-white">
      <svg width="18" height="17" viewBox="0 0 18 17"><rect width="18" height="17" fill="#0c2c88" /><path d="M0 9H5L7 5L9 14L11 2L13 12L14 8H18" stroke="#c8e0ff" fill="none" /></svg>
      <span className="ml-[4px]">Diamag 2 (дд Газель после переустановки на 1 зуб.dm2)</span>
      <div className="ml-auto flex gap-[1px]">
        <div className={`flex h-[16px] w-[19px] items-end justify-center pb-[2px] ${raised}`}><span className="h-[2px] w-[7px] bg-black" /></div>
        <div className={`flex h-[16px] w-[19px] items-center justify-center ${raised}`}>
          <svg width="11" height="10" viewBox="0 0 11 10" fill="none" stroke="#000"><path d="M3 3V.5H10.500V6H8" /><rect x=".5" y="3.500" width="7" height="6" /><path d="M1 4.500H7" /></svg>
        </div>
        <div className={`ml-[1px] flex h-[16px] w-[19px] items-center justify-center ${raised}`}>
          <svg width="10" height="9" viewBox="0 0 10 9" fill="none" stroke="#000" strokeWidth="2"><path d="M1 0L9 9M9 0L1 9" /></svg>
        </div>
      </div>
    </div>
    <div className="flex h-[25px] items-center gap-[7px] pl-[5px] pt-[3px] text-[11px] text-[#303030]">
      <span>Файл</span><span>Сервис</span><span>Окна</span><span>Помощь</span>
    </div>
    <TabBar />
    <Toolbar />
    <Chart />
    <ScrollRow />
    <Controls />
    <Status />
    <Taskbar />
  </div>
)

export default App
